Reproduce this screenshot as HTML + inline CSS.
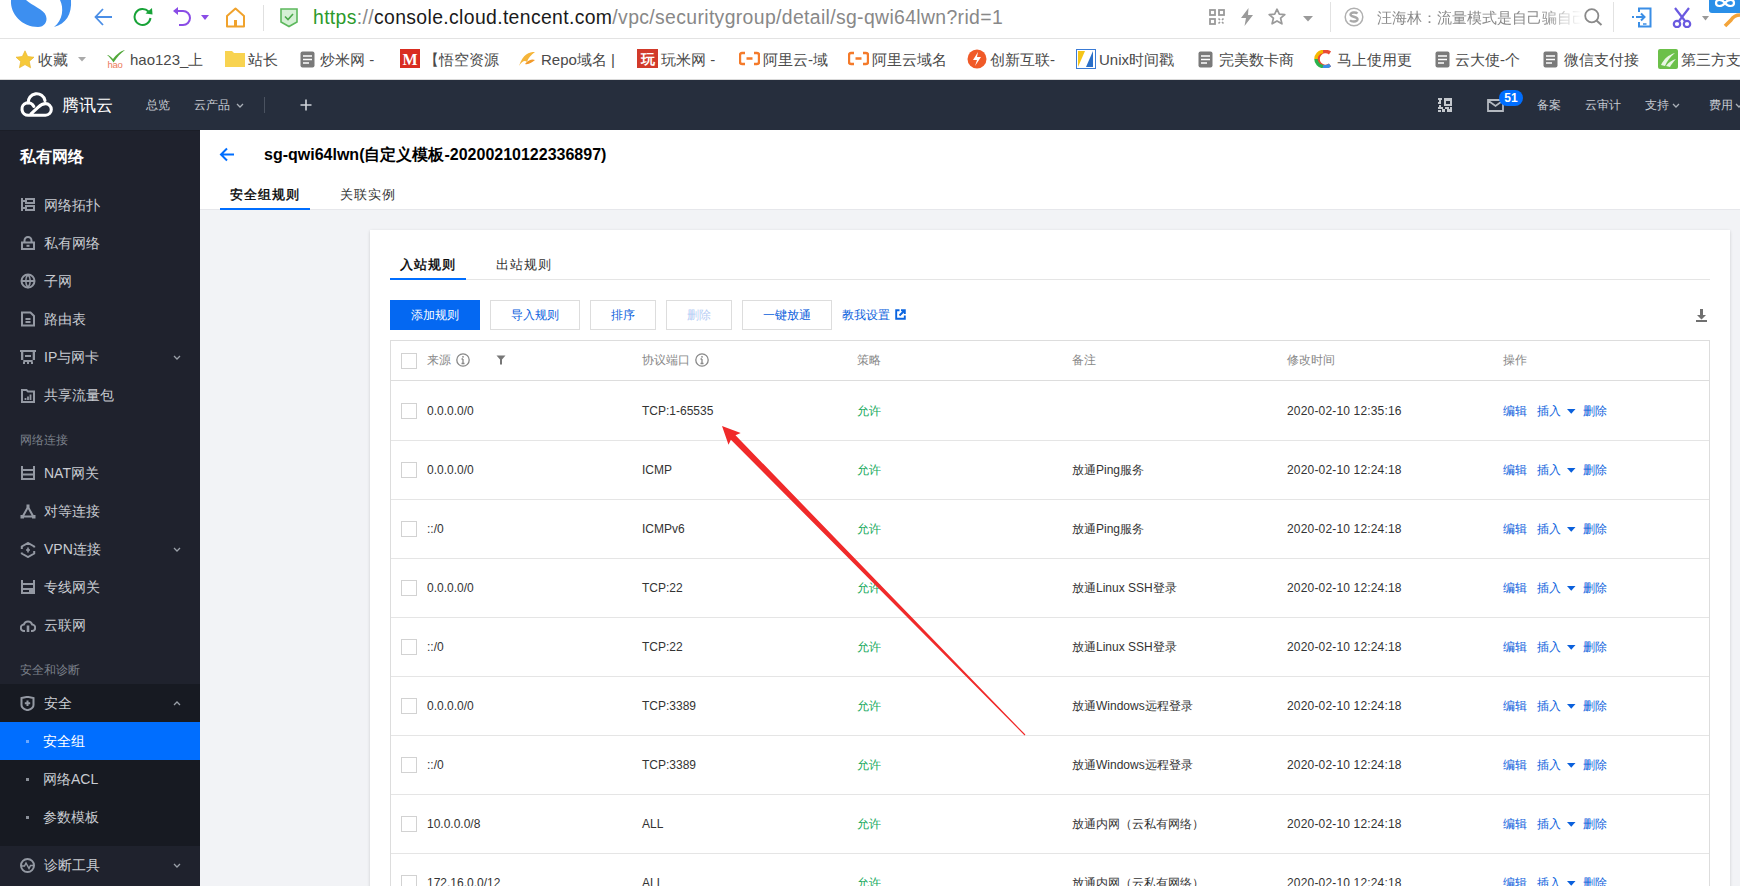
<!DOCTYPE html>
<html><head><meta charset="utf-8">
<style>
*{margin:0;padding:0;box-sizing:border-box}
html,body{width:1740px;height:886px;overflow:hidden;background:#fff;font-family:"Liberation Sans",sans-serif;position:relative}
.a{position:absolute;white-space:nowrap}
#tb{left:0;top:0;width:1740px;height:39px;background:#fff;border-bottom:1px solid #e3e3e3}
#bm{left:0;top:39px;width:1740px;height:41px;background:#fff;border-bottom:1px solid #d9d9d9}
#nav{left:0;top:80px;width:1740px;height:50px;background:#262e3d}
#side{left:0;top:130px;width:200px;height:756px;background:#1f222d;border-top:1px solid #1b1e27}
#hdr{left:200px;top:130px;width:1540px;height:80px;background:#fff;border-bottom:1px solid #e6e7eb}
#gbg{left:200px;top:210px;width:1540px;height:676px;background:#f2f3f6}
#card{left:370px;top:230px;width:1360px;height:700px;background:#fff;box-shadow:0 1px 3px rgba(0,0,0,.16)}
.bk{font-size:15px;color:#4a4a4a;top:51px;line-height:18px}
.ni{font-size:12px;color:#c8ccd3;top:97px;line-height:17px}
.si{font-size:14px;color:#c9ccd2;left:44px;line-height:18px}
.sg{font-size:12px;color:#7c818b;left:20px;line-height:16px}
.th{font-size:12px;color:#888;top:352px;line-height:16px}
.td{font-size:12px;color:#333;line-height:16px}
.ok{color:#14a85a}
.lk{color:#0a60dc}
.cb{width:16px;height:16px;border:1px solid #d2d2d2;background:#fff}
.btn{top:300px;height:30px;border:1px solid #ddd;background:#fff;color:#0a60dc;font-size:12px;line-height:28px;text-align:center}
.rl{left:391px;width:1318px;height:1px;background:#e5e5e5}
</style></head><body>
<div id="tb" class="a"></div>
<div id="bm" class="a"></div>
<!-- toolbar -->
<svg class="a" style="left:0;top:0" width="80" height="30" viewBox="0 0 80 30">
<path d="M11,0 C10,14 22,27 38,27 C44,27 48,22 46,16 C44,9 32,6 26,0 Z" fill="#3d8ff0"/>
<path d="M60,0 C64,8 63,20 54,27 C66,24 72,14 71,0 Z" fill="#3d8ff0"/>
</svg>
<svg class="a" style="left:94px;top:7px" width="20" height="20" viewBox="0 0 20 20"><path d="M18,10 H2 M9,2 L1.5,10 L9,18" fill="none" stroke="#4a8ee6" stroke-width="1.8"/></svg>
<svg class="a" style="left:133px;top:7px" width="22" height="20" viewBox="0 0 22 20"><path d="M17.5,11 A8,8 0 1 1 15.5,4.5" fill="none" stroke="#18a338" stroke-width="2"/><path d="M12.5,6.5 L19.5,7.5 L19,1 Z" fill="#18a338"/></svg>
<svg class="a" style="left:172px;top:6px" width="22" height="22" viewBox="0 0 22 22"><path d="M4,5 H11 A7,7 0 0 1 11,19 H7" fill="none" stroke="#8a4ce6" stroke-width="2"/><path d="M1,5 L6,1 L6,9 Z" fill="#8a4ce6"/></svg>
<svg class="a" style="left:201px;top:15px" width="9" height="6"><path d="M0,0 H8 L4,5 Z" fill="#8a4ce6"/></svg>
<svg class="a" style="left:225px;top:7px" width="21" height="21" viewBox="0 0 21 21"><path d="M2,9 L10.5,1.5 L19,9 V19.5 H2 Z" fill="none" stroke="#f0a22c" stroke-width="2" stroke-linejoin="round"/><rect x="9" y="13" width="3" height="6" fill="#f0a22c"/></svg>
<div class="a" style="left:263px;top:5px;width:1px;height:26px;background:#e0e0e0"></div>
<svg class="a" style="left:279px;top:7px" width="20" height="21" viewBox="0 0 20 21"><path d="M2,2 H18 V15 L10,19.5 L2,15 Z" fill="#d5f0d5" stroke="#5cb85c" stroke-width="1.6"/><path d="M6,9.5 L9,12.5 L14,7" fill="none" stroke="#4aa84a" stroke-width="1.6"/></svg>
<div class="a" style="left:313px;top:6px;font-size:19.4px;color:#888;letter-spacing:0.35px;line-height:23px" id="url"><span style="color:#2b9a2b">https</span><span style="color:#888">://</span><span style="color:#1a1a1a">console.cloud.tencent.com</span>/vpc/securitygroup/detail/sg-qwi64lwn?rid=1</div>



<!-- toolbar right -->
<svg class="a" style="left:1209px;top:9px" width="16" height="16" viewBox="0 0 16 16" fill="none" stroke="#9a9a9a" stroke-width="1.8"><rect x="1" y="1" width="5" height="5"/><rect x="10" y="1" width="5" height="5"/><rect x="1" y="10" width="5" height="5"/><path d="M9.5,9.5 L11,11 M14.5,9.5 L13,11 M9.5,14.5 L11,13 M14.5,14.5 L13,13" stroke-width="1.6"/></svg>
<svg class="a" style="left:1240px;top:8px" width="14" height="18" viewBox="0 0 14 18"><path d="M8.5,0 L1,10 H6 L4.5,18 L13,7 H8 Z" fill="#9a9a9a"/></svg>
<svg class="a" style="left:1268px;top:8px" width="18" height="17" viewBox="0 0 18 17"><path d="M9,1.2 L11.3,6.2 L16.8,6.6 L12.6,10.2 L13.9,15.8 L9,12.9 L4.1,15.8 L5.4,10.2 L1.2,6.6 L6.7,6.2 Z" fill="none" stroke="#9a9a9a" stroke-width="1.7" stroke-linejoin="round"/></svg>
<svg class="a" style="left:1303px;top:16px" width="10" height="6"><path d="M0,0 H10 L5,5.5 Z" fill="#9a9a9a"/></svg>
<div class="a" style="left:1330px;top:2px;width:1px;height:30px;background:#e2e2e2"></div>
<svg class="a" style="left:1344px;top:7px" width="20" height="20" viewBox="0 0 20 20"><circle cx="10" cy="10" r="8.8" fill="none" stroke="#b0b0b0" stroke-width="1.5"/><path d="M13.5,6.5 C12,5 7,5 6.5,7.5 C6,10 14,9.5 13.5,12.5 C13,15 7.5,15 6,13.2" fill="none" stroke="#a8a8a8" stroke-width="2.4"/></svg>
<div class="a" style="left:1377px;top:8px;width:205px;overflow:hidden;font-size:15px;line-height:20px;color:#8a8a8a;-webkit-mask-image:linear-gradient(90deg,#000 80%,transparent 100%)">汪海林：流量模式是自己骗自己</div>
<svg class="a" style="left:1584px;top:8px" width="19" height="18" viewBox="0 0 19 18"><circle cx="7.8" cy="7.8" r="6.6" fill="none" stroke="#8a8a8a" stroke-width="1.8"/><path d="M12.5,12.5 L17.5,17" stroke="#8a8a8a" stroke-width="2"/></svg>
<div class="a" style="left:1613px;top:2px;width:1px;height:30px;background:#e2e2e2"></div>
<svg class="a" style="left:1631px;top:7px" width="22" height="21" viewBox="0 0 22 21"><path d="M8,5 V1.5 H19.5 V19.5 H8 V15" fill="none" stroke="#3a8ee6" stroke-width="2"/><path d="M1,10 H3 M5,10 H13 M10,6.5 L13.5,10 L10,13.5" fill="none" stroke="#3a8ee6" stroke-width="2"/><path d="M12,17 H15.5" stroke="#3a8ee6" stroke-width="1.5"/></svg>
<svg class="a" style="left:1671px;top:7px" width="22" height="21" viewBox="0 0 22 21"><path d="M4,1 L14,14 M18,1 L8,14" stroke="#6a5ae0" stroke-width="2.2"/><circle cx="6" cy="17" r="3.2" fill="none" stroke="#6a5ae0" stroke-width="2.2"/><circle cx="16" cy="17" r="3.2" fill="none" stroke="#6a5ae0" stroke-width="2.2"/></svg>
<svg class="a" style="left:1702px;top:16px" width="8" height="5"><path d="M0,0 H7 L3.5,4.5 Z" fill="#999"/></svg>
<div class="a" style="left:1709px;top:0;width:31px;height:13px;background:#2a8fe8;border-bottom-left-radius:3px"></div>
<svg class="a" style="left:1712px;top:0" width="28" height="11" viewBox="0 0 28 11"><path d="M4,3 C4,-1 10,-1 13,3 C16,7 22,7 22,3 M4,3 C4,7 10,7 13,3 C16,-1 22,-1 22,3" fill="none" stroke="#fff" stroke-width="2.2"/></svg>
<svg class="a" style="left:1722px;top:13px" width="18" height="15" viewBox="0 0 18 15"><path d="M18,2 C14,2 11,4 9,7 L3,13" fill="none" stroke="#f3a43a" stroke-width="3.6"/></svg>
<!-- bookmarks -->
<svg class="a" style="left:15px;top:50px" width="20" height="19" viewBox="0 0 20 19"><path d="M10,0.8 L12.7,6.5 L19,7.2 L14.3,11.4 L15.6,17.8 L10,14.6 L4.4,17.8 L5.7,11.4 L1,7.2 L7.3,6.5 Z" fill="#f6c93a" stroke="#e8b020" stroke-width="0.6"/></svg>
<div class="a bk" style="left:38px">收藏</div>
<svg class="a" style="left:78px;top:57px" width="9" height="5"><path d="M0,0 H8 L4,4.5 Z" fill="#aaa"/></svg>
<svg class="a" style="left:104px;top:49px" width="23" height="20" viewBox="0 0 23 20"><path d="M3,6 C5,6 7,8 9,10 C12,6 16,2 21,1 C17,4 13,8 9.5,13.5 C7.5,10.5 5.5,8 3,6 Z" fill="#52a83a"/><text x="11" y="19" text-anchor="middle" font-size="9.5" font-family="Liberation Sans" fill="#ec7b5c" letter-spacing="-0.3">hao</text></svg>
<div class="a bk" style="left:130px">hao123_上</div>
<svg class="a" style="left:225px;top:50px" width="21" height="18" viewBox="0 0 21 18"><path d="M0,1 H7 L9,3 H20 V17 H0 Z" fill="#f8d350"/></svg>
<div class="a bk" style="left:248px">站长</div>
<svg class="a" style="left:300px;top:51px" width="15" height="17" viewBox="0 0 15 17"><rect x="0.5" y="0.5" width="14" height="16" rx="2" fill="#7a7a7a"/><path d="M3,5 H12 M3,8.5 H12 M3,12 H9" stroke="#fff" stroke-width="1.5"/></svg>
<div class="a bk" style="left:320px">炒米网 -</div>
<svg class="a" style="left:400px;top:49px" width="20" height="19" viewBox="0 0 20 19"><rect width="20" height="19" fill="#d92d20"/><text x="10" y="16" text-anchor="middle" font-size="16" font-weight="bold" font-family="Liberation Serif" fill="#fff">M</text></svg>
<div class="a bk" style="left:424px">【悟空资源</div>
<svg class="a" style="left:517px;top:50px" width="20" height="18" viewBox="0 0 20 18"><path d="M2,16 C6,4 12,2 18,2 C14,5 11,8 10,12 C8,10 5,11 2,16 Z" fill="#f5b53a"/><path d="M8,14 C12,9 16,9 18,10 C15,12 12,15 8,14 Z" fill="#f29a2a"/></svg>
<div class="a bk" style="left:541px">Repo域名 |</div>
<svg class="a" style="left:637px;top:49px" width="21" height="19" viewBox="0 0 21 19"><rect width="21" height="19" fill="#d23a2a"/><text x="10.5" y="15" text-anchor="middle" font-size="14" font-weight="bold" fill="#fff">玩</text></svg>
<div class="a bk" style="left:661px">玩米网 -</div>
<svg class="a" style="left:739px;top:51px" width="21" height="15" viewBox="0 0 21 15"><path d="M6,2 H3 Q1,2 1,4 V11 Q1,13 3,13 H6 M15,2 H18 Q20,2 20,4 V11 Q20,13 18,13 H15 M7.5,7.5 H13.5" fill="none" stroke="#f47a2a" stroke-width="2.4"/></svg>
<div class="a bk" style="left:763px">阿里云-域</div>
<svg class="a" style="left:848px;top:51px" width="21" height="15" viewBox="0 0 21 15"><path d="M6,2 H3 Q1,2 1,4 V11 Q1,13 3,13 H6 M15,2 H18 Q20,2 20,4 V11 Q20,13 18,13 H15 M7.5,7.5 H13.5" fill="none" stroke="#f47a2a" stroke-width="2.4"/></svg>
<div class="a bk" style="left:872px">阿里云域名</div>
<svg class="a" style="left:967px;top:49px" width="20" height="20" viewBox="0 0 20 20"><circle cx="10" cy="10" r="9.5" fill="#f05a28"/><path d="M11,3 L6,11 H10 L8,17 L14,8 H10 Z" fill="#fff"/></svg>
<div class="a bk" style="left:990px">创新互联-</div>
<svg class="a" style="left:1076px;top:49px" width="20" height="20" viewBox="0 0 20 20"><rect x="0.5" y="0.5" width="19" height="19" fill="#fff" stroke="#3a7bd5"/><path d="M2,18 L9,2 H2 Z" fill="#f5c518"/><path d="M10,18 L17,2 V18 Z" fill="#2a6fc9"/></svg>
<div class="a bk" style="left:1099px">Unix时间戳</div>
<svg class="a" style="left:1198px;top:51px" width="15" height="17" viewBox="0 0 15 17"><rect x="0.5" y="0.5" width="14" height="16" rx="2" fill="#7a7a7a"/><path d="M3,5 H12 M3,8.5 H12 M3,12 H9" stroke="#fff" stroke-width="1.5"/></svg>
<div class="a bk" style="left:1219px">完美数卡商</div>
<svg class="a" style="left:1314px;top:50px" width="19" height="18" viewBox="0 0 19 18"><path d="M16,3 A7.5,7.5 0 1 0 16,15" fill="none" stroke="#e94b35" stroke-width="3.5"/><path d="M9,1.5 A7.5,7.5 0 0 0 2,9" fill="none" stroke="#f5b800" stroke-width="3.5"/><path d="M2,9 A7.5,7.5 0 0 0 9,16.5" fill="none" stroke="#2bb24c" stroke-width="3.5"/><path d="M9,16.5 A7.5,7.5 0 0 0 16,15" fill="none" stroke="#3a8ee6" stroke-width="3.5"/></svg>
<div class="a bk" style="left:1337px">马上使用更</div>
<svg class="a" style="left:1435px;top:51px" width="15" height="17" viewBox="0 0 15 17"><rect x="0.5" y="0.5" width="14" height="16" rx="2" fill="#7a7a7a"/><path d="M3,5 H12 M3,8.5 H12 M3,12 H9" stroke="#fff" stroke-width="1.5"/></svg>
<div class="a bk" style="left:1455px">云大使-个</div>
<svg class="a" style="left:1543px;top:51px" width="15" height="17" viewBox="0 0 15 17"><rect x="0.5" y="0.5" width="14" height="16" rx="2" fill="#7a7a7a"/><path d="M3,5 H12 M3,8.5 H12 M3,12 H9" stroke="#fff" stroke-width="1.5"/></svg>
<div class="a bk" style="left:1564px">微信支付接</div>
<svg class="a" style="left:1658px;top:49px" width="20" height="20" viewBox="0 0 20 20"><rect width="20" height="20" rx="2" fill="#6cc04a"/><path d="M3,16 C6,10 10,6 17,4 C12,8 9,12 7,17 Z M8,17 C11,13 14,11 18,10 C15,13 13,16 12,18 Z" fill="#fff" opacity=".85"/></svg>
<div class="a bk" style="left:1681px">第三方支</div>
<div id="nav" class="a"></div>
<div id="side" class="a"></div>

<!-- top nav -->
<svg class="a" style="left:15px;top:88px" width="45" height="34" viewBox="15 88 45 34"><g fill="none" stroke="#fff" stroke-width="3.1" stroke-linecap="round"><path d="M33.8,106.4 A6.2,6.2 0 1 0 28.2,115.2 H45.5 A5.8,5.8 0 0 0 45.5,103.6 C42.5,103.6 40.5,105 38,107.3 L31,113.8"/><path d="M28.2,103 A8.5,8.5 0 0 1 45,100.6"/></g></svg>
<div class="a" style="left:62px;top:95px;font-size:17px;color:#fff;line-height:22px">腾讯云</div>
<div class="a ni" style="left:146px">总览</div>
<div class="a ni" style="left:194px">云产品</div>
<svg class="a" style="left:236px;top:103px" width="8" height="5" viewBox="0 0 8 5"><path d="M1,1 L4,4 L7,1" fill="none" stroke="#aab0b8" stroke-width="1.3"/></svg>
<div class="a" style="left:264px;top:97px;width:1px;height:16px;background:#4a5260"></div>
<svg class="a" style="left:300px;top:99px" width="12" height="12"><path d="M6,0.5 V11.5 M0.5,6 H11.5" stroke="#d0d4da" stroke-width="1.6"/></svg>
<svg class="a" style="left:1438px;top:98px" width="14" height="14" viewBox="0 0 14 14" shape-rendering="crispEdges"><g fill="#c4c8ce"><path d="M6,0 H14 V8 H6 Z M8,2.5 V5.5 H11.5 V2.5 Z" fill-rule="evenodd"/><rect x="0" y="0" width="4" height="2"/><rect x="1" y="2" width="2" height="2"/><rect x="0" y="4" width="3" height="2"/><rect x="1" y="7" width="2" height="2"/><rect x="0" y="9" width="5" height="2"/><rect x="0" y="12" width="3" height="2"/><rect x="4" y="11" width="3" height="3"/><rect x="7" y="9" width="4" height="2"/><rect x="9" y="11" width="5" height="3"/><rect x="12" y="9" width="2" height="2"/></g></svg>
<svg class="a" style="left:1487px;top:99px" width="17" height="13" viewBox="0 0 17 13"><path d="M1,1 H16 V12 H1 Z M1,1.5 L8.5,7 L16,1.5" fill="none" stroke="#b4b9c0" stroke-width="1.8"/></svg>
<div class="a" style="left:1499px;top:90px;width:24px;height:16px;border-radius:8px;background:#006eff;color:#fff;font-size:12px;font-weight:bold;line-height:16px;text-align:center">51</div>
<div class="a ni" style="left:1537px">备案</div>
<div class="a ni" style="left:1585px">云审计</div>
<div class="a ni" style="left:1645px">支持</div>
<svg class="a" style="left:1672px;top:103px" width="8" height="5" viewBox="0 0 8 5"><path d="M1,1 L4,4 L7,1" fill="none" stroke="#aab0b8" stroke-width="1.3"/></svg>
<div class="a ni" style="left:1709px">费用</div>
<svg class="a" style="left:1735px;top:103px" width="8" height="5" viewBox="0 0 8 5"><path d="M1,1 L4,4 L7,1" fill="none" stroke="#aab0b8" stroke-width="1.3"/></svg>

<!-- sidebar -->
<div class="a" style="left:20px;top:146px;font-size:16px;font-weight:bold;color:#fff;line-height:22px">私有网络</div>
<svg class="a" style="left:20px;top:197px" width="16" height="16" viewBox="0 0 16 16"><path d="M1,1 H3 V14 H1 Z M5,1 H15 V7 H5 Z M7,3 V5 H13 V3 Z M5,8 H15 V14 H5 Z M7,10 V12 H13 V10 Z M3,3 H5 V5 H3 Z M3,10 H5 V12 H3 Z" fill="#9499a3" fill-rule="evenodd"/></svg><div class="a si" style="top:196px">网络拓扑</div>
<svg class="a" style="left:20px;top:235px" width="16" height="16" viewBox="0 0 16 16" fill="none" stroke="#9499a3" stroke-width="2"><path d="M4.5,7.5 V5.5 A3.5,3.5 0 0 1 11.5,5.5 V7.5"/><rect x="2" y="7.5" width="12" height="6.5"/><path d="M6.5,10.8 H9.5"/></svg><div class="a si" style="top:234px">私有网络</div>
<svg class="a" style="left:20px;top:273px" width="16" height="16" viewBox="0 0 16 16" fill="none" stroke="#9499a3" stroke-width="2"><circle cx="8" cy="8" r="6.5"/><path d="M1.5,8 H14.5"/><path d="M8,1.5 C5,5 5,11 8,14.5 C11,11 11,5 8,1.5" stroke-width="1.6"/></svg><div class="a si" style="top:272px">子网</div>
<svg class="a" style="left:20px;top:311px" width="16" height="16" viewBox="0 0 16 16" fill="none" stroke="#9499a3" stroke-width="2"><path d="M2,1.5 H10.5 L14,5 V14.5 H2 Z M5.5,8 H10.5 M5.5,11 H10.5"/></svg><div class="a si" style="top:310px">路由表</div>
<svg class="a" style="left:20px;top:350px" width="16" height="16" viewBox="0 0 16 16"><path d="M0,0 H16 V2 H0 Z M1,2 H3.3 V12 H1 Z M12.7,2 H15 V12 H12.7 Z M1,10 H15 V12 H1 Z M5,5 H11 V7 H5 Z M3,12 H5 V14 H3 Z M7,12 H9 V14 H7 Z M11,12 H13 V14 H11 Z" fill="#9499a3" fill-rule="evenodd"/></svg><div class="a si" style="top:348px">IP与网卡</div>
<svg class="a" style="left:20px;top:388px" width="16" height="16" viewBox="0 0 16 16" fill="none" stroke="#9499a3" stroke-width="2"><path d="M2,2 H6.5 L8,3.5 H14 V14 H2 Z"/><path d="M5.5,12 V10 M8,12 V8.5 M10.5,12 V6.5" stroke-width="1.8"/></svg><div class="a si" style="top:386px">共享流量包</div>
<svg class="a" style="left:20px;top:466px" width="16" height="16" viewBox="0 0 16 16"><path d="M1,0 H3 V3 H1 Z M13,0 H15 V3 H13 Z M1,3 H15 V14 H1 Z M3,5 V7.5 H13 V5 Z M3,9.5 V12 H13 V9.5 Z" fill="#9499a3" fill-rule="evenodd"/></svg><div class="a si" style="top:464px">NAT网关</div>
<svg class="a" style="left:20px;top:504px" width="16" height="16" viewBox="0 0 16 16" fill="none" stroke="#9499a3" stroke-width="2"><path d="M8,3 L3,12 M8,3 L13,12 M2,12.5 H14"/><rect x="6.5" y="0.5" width="3" height="3" fill="#9499a3" stroke="none"/><rect x="0.5" y="11" width="3.5" height="3.5" fill="#9499a3" stroke="none"/><rect x="12" y="11" width="3.5" height="3.5" fill="#9499a3" stroke="none"/></svg><div class="a si" style="top:502px">对等连接</div>
<svg class="a" style="left:20px;top:542px" width="16" height="16" viewBox="0 0 16 16" fill="none" stroke="#9499a3" stroke-width="2"><path d="M1.8,7 V4.5 L8,1 L14.2,4.5 V5.5 M14.2,9 V11.5 L8,15 L1.8,11.5 V10.5"/><path d="M8,5.5 V10.5 M6,8 H10" stroke-width="1.6"/></svg><div class="a si" style="top:540px">VPN连接</div>
<svg class="a" style="left:20px;top:580px" width="16" height="16" viewBox="0 0 16 16"><path d="M1,0 H3 V3 H1 Z M13,0 H15 V3 H13 Z M1,3 H15 V14 H1 Z M3,5 V8 H13 V5 Z M3,10 V12 H9 V10 Z" fill="#9499a3" fill-rule="evenodd"/></svg><div class="a si" style="top:578px">专线网关</div>
<svg class="a" style="left:20px;top:617px" width="16" height="16" viewBox="0 0 16 16" fill="none" stroke="#9499a3" stroke-width="2"><path d="M5,14 H4.2 A3.2,3.2 0 0 1 3.8,7.6 A4.4,4.4 0 0 1 12.2,7.6 A3.2,3.2 0 0 1 11.8,14 H11"/><path d="M8,8.5 V15" stroke-width="2.6"/></svg><div class="a si" style="top:616px">云联网</div>
<svg class="a" style="left:173px;top:355px" width="8" height="5" viewBox="0 0 8 5"><path d="M1,1 L4,4 L7,1" fill="none" stroke="#9aa0a8" stroke-width="1.3"/></svg><svg class="a" style="left:173px;top:547px" width="8" height="5" viewBox="0 0 8 5"><path d="M1,1 L4,4 L7,1" fill="none" stroke="#9aa0a8" stroke-width="1.3"/></svg><div class="a sg" style="top:432px">网络连接</div>
<div class="a sg" style="top:662px">安全和诊断</div>
<div class="a" style="left:0;top:684px;width:200px;height:162px;background:#171a22"></div>
<div class="a" style="left:0;top:722px;width:200px;height:38px;background:#006eff"></div>
<svg class="a" style="left:20px;top:696px" width="15" height="15" viewBox="0 0 15 15" fill="none" stroke="#9499a3" stroke-width="2"><path d="M1.5,2 L7.5,0.8 L13.5,2 V9 C13.5,11.5 10,13.5 7.5,14.2 C5,13.5 1.5,11.5 1.5,9 Z M7.5,4.5 V10 M4.8,7.2 H10.2"/></svg><div class="a si" style="top:694px">安全</div>
<svg class="a" style="left:173px;top:701px" width="8" height="5" viewBox="0 0 8 5"><path d="M1,4 L4,1 L7,4" fill="none" stroke="#9aa0a8" stroke-width="1.3"/></svg><div class="a" style="left:26px;top:740px;width:3px;height:3px;background:#6aa8ff"></div>
<div class="a si" style="left:43px;top:732px;color:#fff">安全组</div>
<div class="a" style="left:26px;top:778px;width:3px;height:3px;background:#8a8f98"></div>
<div class="a si" style="left:43px;top:770px;color:#c9ccd2">网络ACL</div>
<div class="a" style="left:26px;top:816px;width:3px;height:3px;background:#8a8f98"></div>
<div class="a si" style="left:43px;top:808px;color:#c9ccd2">参数模板</div>
<svg class="a" style="left:20px;top:858px" width="15" height="15" viewBox="0 0 15 15" fill="none" stroke="#9499a3" stroke-width="2"><circle cx="7.5" cy="7.5" r="6.5"/><path d="M2,8 H4.5 L6,5 L9,10.5 L10.5,7.5 H13" stroke-width="1.5"/></svg><div class="a si" style="top:856px">诊断工具</div>
<svg class="a" style="left:173px;top:863px" width="8" height="5" viewBox="0 0 8 5"><path d="M1,1 L4,4 L7,1" fill="none" stroke="#9aa0a8" stroke-width="1.3"/></svg><div id="hdr" class="a"></div>
<div id="gbg" class="a"></div>
<div id="card" class="a"></div>

<!-- content header -->
<svg class="a" style="left:219px;top:147px" width="16" height="15" viewBox="0 0 16 15"><path d="M15,7.5 H2 M8,1.5 L2,7.5 L8,13.5" fill="none" stroke="#006eff" stroke-width="2"/></svg>
<div class="a" style="left:264px;top:145px;font-size:16px;font-weight:bold;color:#000;line-height:20px">sg-qwi64lwn(自定义模板-20200210122336897)</div>
<div class="a" style="left:230px;top:186px;font-size:13px;color:#000;font-weight:400;-webkit-text-stroke:0.35px #000;line-height:17px;letter-spacing:1px">安全组规则</div>
<div class="a" style="left:220px;top:208px;width:90px;height:2px;background:#006eff"></div>
<div class="a" style="left:340px;top:186px;font-size:13px;color:#333;line-height:17px;letter-spacing:1px">关联实例</div>

<!-- card -->
<div class="a" style="left:400px;top:256px;font-size:13px;color:#000;font-weight:400;-webkit-text-stroke:0.35px #000;line-height:17px;letter-spacing:1px">入站规则</div>
<div class="a" style="left:496px;top:256px;font-size:13px;color:#333;line-height:17px;letter-spacing:1px">出站规则</div>
<div class="a" style="left:390px;top:279px;width:1320px;height:1px;background:#e5e5e5"></div>
<div class="a" style="left:390px;top:278px;width:76px;height:2px;background:#006eff"></div>
<div class="a btn" style="left:390px;width:90px;background:#0468f2;border-color:#0468f2;color:#fff">添加规则</div>
<div class="a btn" style="left:490px;width:90px">导入规则</div>
<div class="a btn" style="left:590px;width:66px">排序</div>
<div class="a btn" style="left:666px;width:66px;color:#b6cdf5">删除</div>
<div class="a btn" style="left:742px;width:90px">一键放通</div>
<div class="a" style="left:842px;top:307px;font-size:12px;color:#0a60dc;line-height:16px">教我设置</div>
<svg class="a" style="left:895px;top:309px" width="11" height="11" viewBox="0 0 11 11"><path d="M4.5,1.2 H1.2 V9.8 H9.8 V6.5" fill="none" stroke="#0a64e0" stroke-width="1.9"/><path d="M4.5,6.5 L9.5,1.5 M6,1.2 H9.8 V5" fill="none" stroke="#0a64e0" stroke-width="1.9"/></svg>
<svg class="a" style="left:1696px;top:309px" width="12" height="14" viewBox="0 0 12 14"><path d="M4,0 H7 V6 H10 L5.5,10.5 L1,6 H4 Z M0,11 H11 V13 H0 Z" fill="#707070"/></svg>
<!-- table -->
<div class="a" style="left:390px;top:340px;width:1320px;height:560px;border:1px solid #ddd;border-bottom:none"></div>
<div class="a" style="left:391px;top:380px;width:1318px;height:1px;background:#ddd"></div>
<div class="a cb" style="left:401px;top:353px"></div>
<div class="a th" style="left:427px">来源</div>
<svg class="a" style="left:456px;top:353px" width="14" height="14" viewBox="0 0 14 14"><circle cx="7" cy="7" r="6.2" fill="none" stroke="#888" stroke-width="1.3"/><path d="M7,6 V10.5 M5.5,6 H7 M5.5,10.5 H8.5" stroke="#888" stroke-width="1.3"/><circle cx="7" cy="3.8" r="0.9" fill="#888"/></svg>
<svg class="a" style="left:496px;top:355px" width="10" height="10" viewBox="0 0 10 10"><path d="M0.5,0.5 H9.5 L6,4.5 V9.5 H4 V4.5 Z" fill="#777"/></svg>
<div class="a th" style="left:642px">协议端口</div>
<svg class="a" style="left:695px;top:353px" width="14" height="14" viewBox="0 0 14 14"><circle cx="7" cy="7" r="6.2" fill="none" stroke="#888" stroke-width="1.3"/><path d="M7,6 V10.5 M5.5,6 H7 M5.5,10.5 H8.5" stroke="#888" stroke-width="1.3"/><circle cx="7" cy="3.8" r="0.9" fill="#888"/></svg>
<div class="a th" style="left:857px">策略</div>
<div class="a th" style="left:1072px">备注</div>
<div class="a th" style="left:1287px">修改时间</div>
<div class="a th" style="left:1503px">操作</div>
<div class="a cb" style="left:401px;top:403px"></div>
<div class="a td" style="left:427px;top:403px">0.0.0.0/0</div>
<div class="a td" style="left:642px;top:403px">TCP:1-65535</div>
<div class="a td ok" style="left:857px;top:403px">允许</div>
<div class="a td" style="left:1072px;top:403px"></div>
<div class="a td" style="left:1287px;top:403px;letter-spacing:0.17px">2020-02-10 12:35:16</div>
<div class="a td lk" style="left:1503px;top:403px">编辑</div>
<div class="a td lk" style="left:1537px;top:403px">插入</div>
<svg class="a" style="left:1567px;top:408px" width="9" height="7" viewBox="0 0 9 7"><path d="M0,1 H8.5 L4.25,5.8 Z" fill="#0a60dc"/></svg><div class="a td lk" style="left:1583px;top:403px">删除</div>
<div class="a rl" style="top:440px"></div>
<div class="a cb" style="left:401px;top:462px"></div>
<div class="a td" style="left:427px;top:462px">0.0.0.0/0</div>
<div class="a td" style="left:642px;top:462px">ICMP</div>
<div class="a td ok" style="left:857px;top:462px">允许</div>
<div class="a td" style="left:1072px;top:462px">放通Ping服务</div>
<div class="a td" style="left:1287px;top:462px;letter-spacing:0.17px">2020-02-10 12:24:18</div>
<div class="a td lk" style="left:1503px;top:462px">编辑</div>
<div class="a td lk" style="left:1537px;top:462px">插入</div>
<svg class="a" style="left:1567px;top:467px" width="9" height="7" viewBox="0 0 9 7"><path d="M0,1 H8.5 L4.25,5.8 Z" fill="#0a60dc"/></svg><div class="a td lk" style="left:1583px;top:462px">删除</div>
<div class="a rl" style="top:499px"></div>
<div class="a cb" style="left:401px;top:521px"></div>
<div class="a td" style="left:427px;top:521px">::/0</div>
<div class="a td" style="left:642px;top:521px">ICMPv6</div>
<div class="a td ok" style="left:857px;top:521px">允许</div>
<div class="a td" style="left:1072px;top:521px">放通Ping服务</div>
<div class="a td" style="left:1287px;top:521px;letter-spacing:0.17px">2020-02-10 12:24:18</div>
<div class="a td lk" style="left:1503px;top:521px">编辑</div>
<div class="a td lk" style="left:1537px;top:521px">插入</div>
<svg class="a" style="left:1567px;top:526px" width="9" height="7" viewBox="0 0 9 7"><path d="M0,1 H8.5 L4.25,5.8 Z" fill="#0a60dc"/></svg><div class="a td lk" style="left:1583px;top:521px">删除</div>
<div class="a rl" style="top:558px"></div>
<div class="a cb" style="left:401px;top:580px"></div>
<div class="a td" style="left:427px;top:580px">0.0.0.0/0</div>
<div class="a td" style="left:642px;top:580px">TCP:22</div>
<div class="a td ok" style="left:857px;top:580px">允许</div>
<div class="a td" style="left:1072px;top:580px">放通Linux SSH登录</div>
<div class="a td" style="left:1287px;top:580px;letter-spacing:0.17px">2020-02-10 12:24:18</div>
<div class="a td lk" style="left:1503px;top:580px">编辑</div>
<div class="a td lk" style="left:1537px;top:580px">插入</div>
<svg class="a" style="left:1567px;top:585px" width="9" height="7" viewBox="0 0 9 7"><path d="M0,1 H8.5 L4.25,5.8 Z" fill="#0a60dc"/></svg><div class="a td lk" style="left:1583px;top:580px">删除</div>
<div class="a rl" style="top:617px"></div>
<div class="a cb" style="left:401px;top:639px"></div>
<div class="a td" style="left:427px;top:639px">::/0</div>
<div class="a td" style="left:642px;top:639px">TCP:22</div>
<div class="a td ok" style="left:857px;top:639px">允许</div>
<div class="a td" style="left:1072px;top:639px">放通Linux SSH登录</div>
<div class="a td" style="left:1287px;top:639px;letter-spacing:0.17px">2020-02-10 12:24:18</div>
<div class="a td lk" style="left:1503px;top:639px">编辑</div>
<div class="a td lk" style="left:1537px;top:639px">插入</div>
<svg class="a" style="left:1567px;top:644px" width="9" height="7" viewBox="0 0 9 7"><path d="M0,1 H8.5 L4.25,5.8 Z" fill="#0a60dc"/></svg><div class="a td lk" style="left:1583px;top:639px">删除</div>
<div class="a rl" style="top:676px"></div>
<div class="a cb" style="left:401px;top:698px"></div>
<div class="a td" style="left:427px;top:698px">0.0.0.0/0</div>
<div class="a td" style="left:642px;top:698px">TCP:3389</div>
<div class="a td ok" style="left:857px;top:698px">允许</div>
<div class="a td" style="left:1072px;top:698px">放通Windows远程登录</div>
<div class="a td" style="left:1287px;top:698px;letter-spacing:0.17px">2020-02-10 12:24:18</div>
<div class="a td lk" style="left:1503px;top:698px">编辑</div>
<div class="a td lk" style="left:1537px;top:698px">插入</div>
<svg class="a" style="left:1567px;top:703px" width="9" height="7" viewBox="0 0 9 7"><path d="M0,1 H8.5 L4.25,5.8 Z" fill="#0a60dc"/></svg><div class="a td lk" style="left:1583px;top:698px">删除</div>
<div class="a rl" style="top:735px"></div>
<div class="a cb" style="left:401px;top:757px"></div>
<div class="a td" style="left:427px;top:757px">::/0</div>
<div class="a td" style="left:642px;top:757px">TCP:3389</div>
<div class="a td ok" style="left:857px;top:757px">允许</div>
<div class="a td" style="left:1072px;top:757px">放通Windows远程登录</div>
<div class="a td" style="left:1287px;top:757px;letter-spacing:0.17px">2020-02-10 12:24:18</div>
<div class="a td lk" style="left:1503px;top:757px">编辑</div>
<div class="a td lk" style="left:1537px;top:757px">插入</div>
<svg class="a" style="left:1567px;top:762px" width="9" height="7" viewBox="0 0 9 7"><path d="M0,1 H8.5 L4.25,5.8 Z" fill="#0a60dc"/></svg><div class="a td lk" style="left:1583px;top:757px">删除</div>
<div class="a rl" style="top:794px"></div>
<div class="a cb" style="left:401px;top:816px"></div>
<div class="a td" style="left:427px;top:816px">10.0.0.0/8</div>
<div class="a td" style="left:642px;top:816px">ALL</div>
<div class="a td ok" style="left:857px;top:816px">允许</div>
<div class="a td" style="left:1072px;top:816px">放通内网（云私有网络）</div>
<div class="a td" style="left:1287px;top:816px;letter-spacing:0.17px">2020-02-10 12:24:18</div>
<div class="a td lk" style="left:1503px;top:816px">编辑</div>
<div class="a td lk" style="left:1537px;top:816px">插入</div>
<svg class="a" style="left:1567px;top:821px" width="9" height="7" viewBox="0 0 9 7"><path d="M0,1 H8.5 L4.25,5.8 Z" fill="#0a60dc"/></svg><div class="a td lk" style="left:1583px;top:816px">删除</div>
<div class="a rl" style="top:853px"></div>
<div class="a cb" style="left:401px;top:875px"></div>
<div class="a td" style="left:427px;top:875px">172.16.0.0/12</div>
<div class="a td" style="left:642px;top:875px">ALL</div>
<div class="a td ok" style="left:857px;top:875px">允许</div>
<div class="a td" style="left:1072px;top:875px">放通内网（云私有网络）</div>
<div class="a td" style="left:1287px;top:875px;letter-spacing:0.17px">2020-02-10 12:24:18</div>
<div class="a td lk" style="left:1503px;top:875px">编辑</div>
<div class="a td lk" style="left:1537px;top:875px">插入</div>
<svg class="a" style="left:1567px;top:880px" width="9" height="7" viewBox="0 0 9 7"><path d="M0,1 H8.5 L4.25,5.8 Z" fill="#0a60dc"/></svg><div class="a td lk" style="left:1583px;top:875px">删除</div>

<svg class="a" style="left:0;top:0" width="1740" height="886" viewBox="0 0 1740 886">
<path d="M722.0,426.0 L740.7,432.9 L735.5,435.2 L1025.4,734.6 L1024.6,735.4 L730.9,439.7 L728.5,444.8 Z" fill="#f02a2a"/>
</svg>
</body></html>
